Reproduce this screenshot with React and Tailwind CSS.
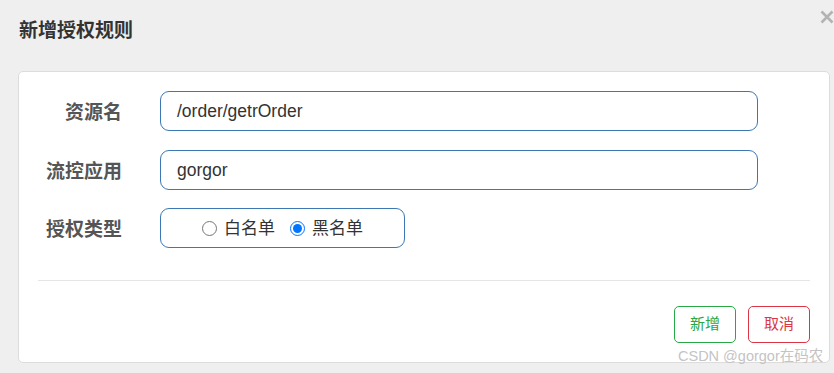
import React from "react";

export default function App() {
  const font = { fontFamily: '"Liberation Sans", "Noto Sans CJK SC", sans-serif' };
  return (
    <div
      className="relative w-[834px] h-[373px] overflow-hidden bg-[#efefef]"
      style={font}
    >
      <div className="px-[19px] pt-[17px] h-[45px] leading-[28px] text-[19px] font-bold text-[#333]">
        新增授权规则
      </div>
      <svg
        className="absolute left-[820px] top-[10px]"
        width="14"
        height="14"
        viewBox="0 0 14 14"
      >
        <path d="M1.5 1.5 L12.5 12.5 M12.5 1.5 L1.5 12.5" stroke="#b3b3b3" strokeWidth="2.6" />
      </svg>

      <div className="mt-[26px] ml-[18px] w-[812px] h-[292px] bg-white border border-[#dcdcdc] rounded-[5px] px-[19px] pt-[19px]">
        <div className="flex items-center h-[40px]">
          <div className="w-[84px] pt-[4px] text-right text-[19px] font-bold text-[#555]">资源名</div>
          <div className="ml-[38px] w-[598px] h-[40px] border border-[#3b78b4] rounded-[9px] px-[16px] flex items-center text-[17.5px] text-[#333]">
            /order/getrOrder
          </div>
        </div>
        <div className="flex items-center h-[40px] mt-[19px]">
          <div className="w-[84px] pt-[4px] text-right text-[19px] font-bold text-[#555]">流控应用</div>
          <div className="ml-[38px] w-[598px] h-[40px] border border-[#3b78b4] rounded-[9px] px-[16px] flex items-center text-[17.5px] text-[#333]">
            gorgor
          </div>
        </div>
        <div className="flex items-center h-[40px] mt-[18px]">
          <div className="w-[84px] pt-[4px] text-right text-[19px] font-bold text-[#555]">授权类型</div>
          <div className="ml-[38px] w-[245px] h-[40px] border border-[#3b78b4] rounded-[9px] flex items-center justify-center text-[17px] text-[#333]">
            <label className="flex items-center">
              <input type="radio" name="t" className="m-0 w-[15px] h-[15px]" readOnly />
              <span className="ml-[7px] pt-[2px]">白名单</span>
            </label>
            <label className="flex items-center ml-[15px]">
              <input type="radio" name="t" className="m-0 w-[15px] h-[15px]" defaultChecked />
              <span className="ml-[7px] pt-[2px]">黑名单</span>
            </label>
          </div>
        </div>
        <div className="mt-[32px] h-px bg-[#e5e5e5]" />
        <div className="mt-[25px] flex justify-end gap-[12px]">
          <button className="w-[62px] h-[37px] border border-[#28a745] rounded-[5px] text-[15px] text-[#28a745] bg-white">
            新增
          </button>
          <button className="w-[62px] h-[37px] border border-[#dc3545] rounded-[5px] text-[15px] text-[#dc3545] bg-white">
            取消
          </button>
        </div>
      </div>

      <div className="absolute left-[678px] top-[347px] text-[14.5px] leading-[18px] text-[#c4c4c4]">
        CSDN @gorgor在码农
      </div>
    </div>
  );
}
